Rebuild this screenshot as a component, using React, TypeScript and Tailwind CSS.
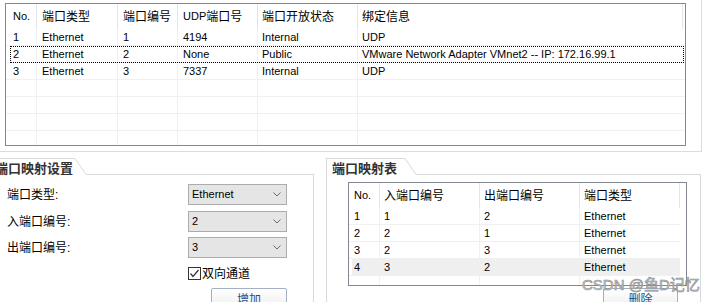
import React from "react";

const topRows: string[][] = [
  ["1", "Ethernet", "1", "4194", "Internal", "UDP"],
  ["2", "Ethernet", "2", "None", "Public", "VMware Network Adapter VMnet2 -- IP: 172.16.99.1"],
  ["3", "Ethernet", "3", "7337", "Internal", "UDP"],
  ["", "", "", "", "", ""],
  ["", "", "", "", "", ""],
  ["", "", "", "", "", ""],
  ["", "", "", "", "", ""],
];

const mapRows: string[][] = [
  ["1", "1", "2", "Ethernet"],
  ["2", "2", "1", "Ethernet"],
  ["3", "2", "3", "Ethernet"],
  ["4", "3", "2", "Ethernet"],
  ["", "", "", ""],
];

function Chevron() {
  return (
    <svg width="8" height="5" viewBox="0 0 8 5" className="shrink-0">
      <polyline points="0.5,0.5 4,4 7.5,0.5" fill="none" stroke="#6b6b6b" strokeWidth="1" />
    </svg>
  );
}

function Combo({ value }: { value: string }) {
  return (
    <div className="w-[99px] h-[21px] border border-[#acacac] bg-[#e5e5e5] flex items-center justify-between pl-[3px] pr-[5px]">
      <span className="text-[11px] leading-none">{value}</span>
      <Chevron />
    </div>
  );
}

function GroupHeader({ title, tabW, left }: { title: string; tabW: string; left?: boolean }) {
  return (
    <div className="flex h-[17px]">
      <div
        className={
          "border-t border-[#d9d9d9] " +
          tabW +
          (left ? " border-l pl-[5px]" : " -ml-[5px]")
        }
      >
        <span className="block text-[13px] font-bold text-[#333333] leading-[13px] pt-[3px] whitespace-nowrap">
          {title}
        </span>
      </div>
      <svg width="11" height="17" viewBox="0 0 11 17" className="shrink-0">
        <line x1="0" y1="0.5" x2="11" y2="16.5" stroke="#d9d9d9" strokeWidth="1" />
      </svg>
      <div className="flex-1 border-b border-[#d9d9d9]" />
    </div>
  );
}

function Btn({ label, ml }: { label: string; ml: string }) {
  return (
    <div
      className={
        "h-[24px] border border-[#a3afc2] rounded-[2px] bg-gradient-to-b from-white to-[#ececec] flex items-center justify-center text-[12px] text-[#1f4e8c] " +
        ml
      }
    >
      {label}
    </div>
  );
}

export default function App() {
  const topW = ["w-[31px] pl-[7px]", "w-[81px] pl-[5px]", "w-[60px] pl-[5px]", "w-[80px] pl-[5px]", "w-[100px] pl-[4px]"];
  const mapW = ["w-[31px] pl-[5px]", "w-[100px] pl-[4px]", "w-[100px] pl-[4px]"];
  return (
    <div className="w-[717px] h-[302px] overflow-hidden bg-white relative text-black [font-family:'Liberation_Sans','Noto_Sans_CJK_SC',sans-serif]">
      {/* top list */}
      <div className="w-[702px] h-[152px] border-r border-b border-[#dcdcdc] pt-[3px] pl-[5px]">
        <div className="w-[681px] h-[143px] border border-[#828790] overflow-hidden">
          <div className="flex h-[25px] text-[12px]">
            <div className="w-[31px] pl-[7px] border-r border-[#e5e5e5] flex items-center text-[11px]">No.</div>
            <div className="w-[81px] pl-[5px] border-r border-[#e5e5e5] flex items-center">端口类型</div>
            <div className="w-[60px] pl-[5px] border-r border-[#e5e5e5] flex items-center">端口编号</div>
            <div className="w-[80px] pl-[5px] border-r border-[#e5e5e5] flex items-center whitespace-nowrap">
              <span className="text-[11px]">UDP</span>端口号
            </div>
            <div className="w-[100px] pl-[4px] border-r border-[#e5e5e5] flex items-center">端口开放状态</div>
            <div className="w-[325px] pl-[4px] border-r border-[#e5e5e5] flex items-center">绑定信息</div>
          </div>
          {topRows.map((r, i) => (
            <div key={i} className="relative flex h-[17px] border-b border-[#f0f0f0] text-[11px]">
              {r.slice(0, 5).map((c, j) => (
                <div key={j} className={"border-r border-[#f0f0f0] flex items-center whitespace-nowrap " + topW[j]}>
                  {c}
                </div>
              ))}
              <div className="flex-1 pl-[4px] flex items-center whitespace-nowrap">{r[5]}</div>
              {i === 1 && (
                <div className="absolute left-[4px] top-0 w-[674px] h-[17px] border border-dotted border-black" />
              )}
            </div>
          ))}
        </div>
      </div>

      {/* bottom groups */}
      <div className="flex">
        {/* left group */}
        <div className="w-[314px] mt-[6px] flex flex-col">
          <GroupHeader title="端口映射设置" tabW="w-[80px]" />
          <div className="h-[200px] border-r border-[#d9d9d9] flex flex-col">
            <div className="flex items-center h-[21px] mt-[9px]">
              <div className="w-[188px] pl-[7px] text-[12px]">端口类型:</div>
              <Combo value="Ethernet" />
            </div>
            <div className="flex items-center h-[21px] mt-[6px]">
              <div className="w-[188px] pl-[7px] text-[12px]">入端口编号:</div>
              <Combo value="2" />
            </div>
            <div className="flex items-center h-[21px] mt-[5px]">
              <div className="w-[188px] pl-[7px] text-[12px]">出端口编号:</div>
              <Combo value="3" />
            </div>
            <div className="flex items-center h-[13px] mt-[9px] pl-[188px]">
              <div className="w-[13px] h-[13px] border border-[#333333] bg-white flex items-center justify-center">
                <svg width="11" height="11" viewBox="0 0 11 11">
                  <polyline points="1.5,5.5 4,8.5 9.5,2" fill="none" stroke="#333333" strokeWidth="1.2" />
                </svg>
              </div>
              <span className="ml-[1px] text-[12px] leading-none">双向通道</span>
            </div>
            <div className="flex mt-[8px]">
              <Btn label="增加" ml="ml-[211px] w-[76px]" />
            </div>
          </div>
        </div>

        {/* right group */}
        <div className="w-[375px] ml-[12px] mt-[6px] flex flex-col">
          <GroupHeader title="端口映射表" tabW="w-[79px]" left />
          <div className="h-[200px] border-l border-r border-[#d9d9d9] flex flex-col">
            <div className="ml-[21px] mt-[7px] w-[339px] h-[104px] border border-[#828790] overflow-hidden">
              <div className="flex h-[25px] text-[12px]">
                <div className="w-[31px] pl-[5px] border-r border-[#e5e5e5] flex items-center text-[11px]">No.</div>
                <div className="w-[100px] pl-[4px] border-r border-[#e5e5e5] flex items-center">入端口编号</div>
                <div className="w-[100px] pl-[4px] border-r border-[#e5e5e5] flex items-center">出端口编号</div>
                <div className="w-[100px] pl-[4px] border-r border-[#e5e5e5] flex items-center">端口类型</div>
              </div>
              {mapRows.map((r, i) => (
                <div
                  key={i}
                  className={
                    "flex w-[331px] h-[17px] border-b border-[#f0f0f0] text-[11px] " +
                    (i === 3 ? "bg-[linear-gradient(to_right,white_3px,#efefef_3px)]" : "")
                  }
                >
                  {r.slice(0, 3).map((c, j) => (
                    <div key={j} className={"border-r border-[#f0f0f0] flex items-center " + mapW[j]}>
                      {c}
                    </div>
                  ))}
                  <div className="flex-1 pl-[4px] flex items-center">{r[3]}</div>
                </div>
              ))}
            </div>
            <div className="flex mt-[2px]">
              <Btn label="删除" ml="ml-[276px] w-[75px]" />
            </div>
          </div>
        </div>
      </div>

      {/* watermark */}
      <div className="absolute left-[582px] top-[276px] text-[15px] leading-[18px] whitespace-nowrap text-[#d2d2d2] [-webkit-text-stroke:0.6px_#8c8c8c]">
        CSDN @鱼D记忆
      </div>
    </div>
  );
}
